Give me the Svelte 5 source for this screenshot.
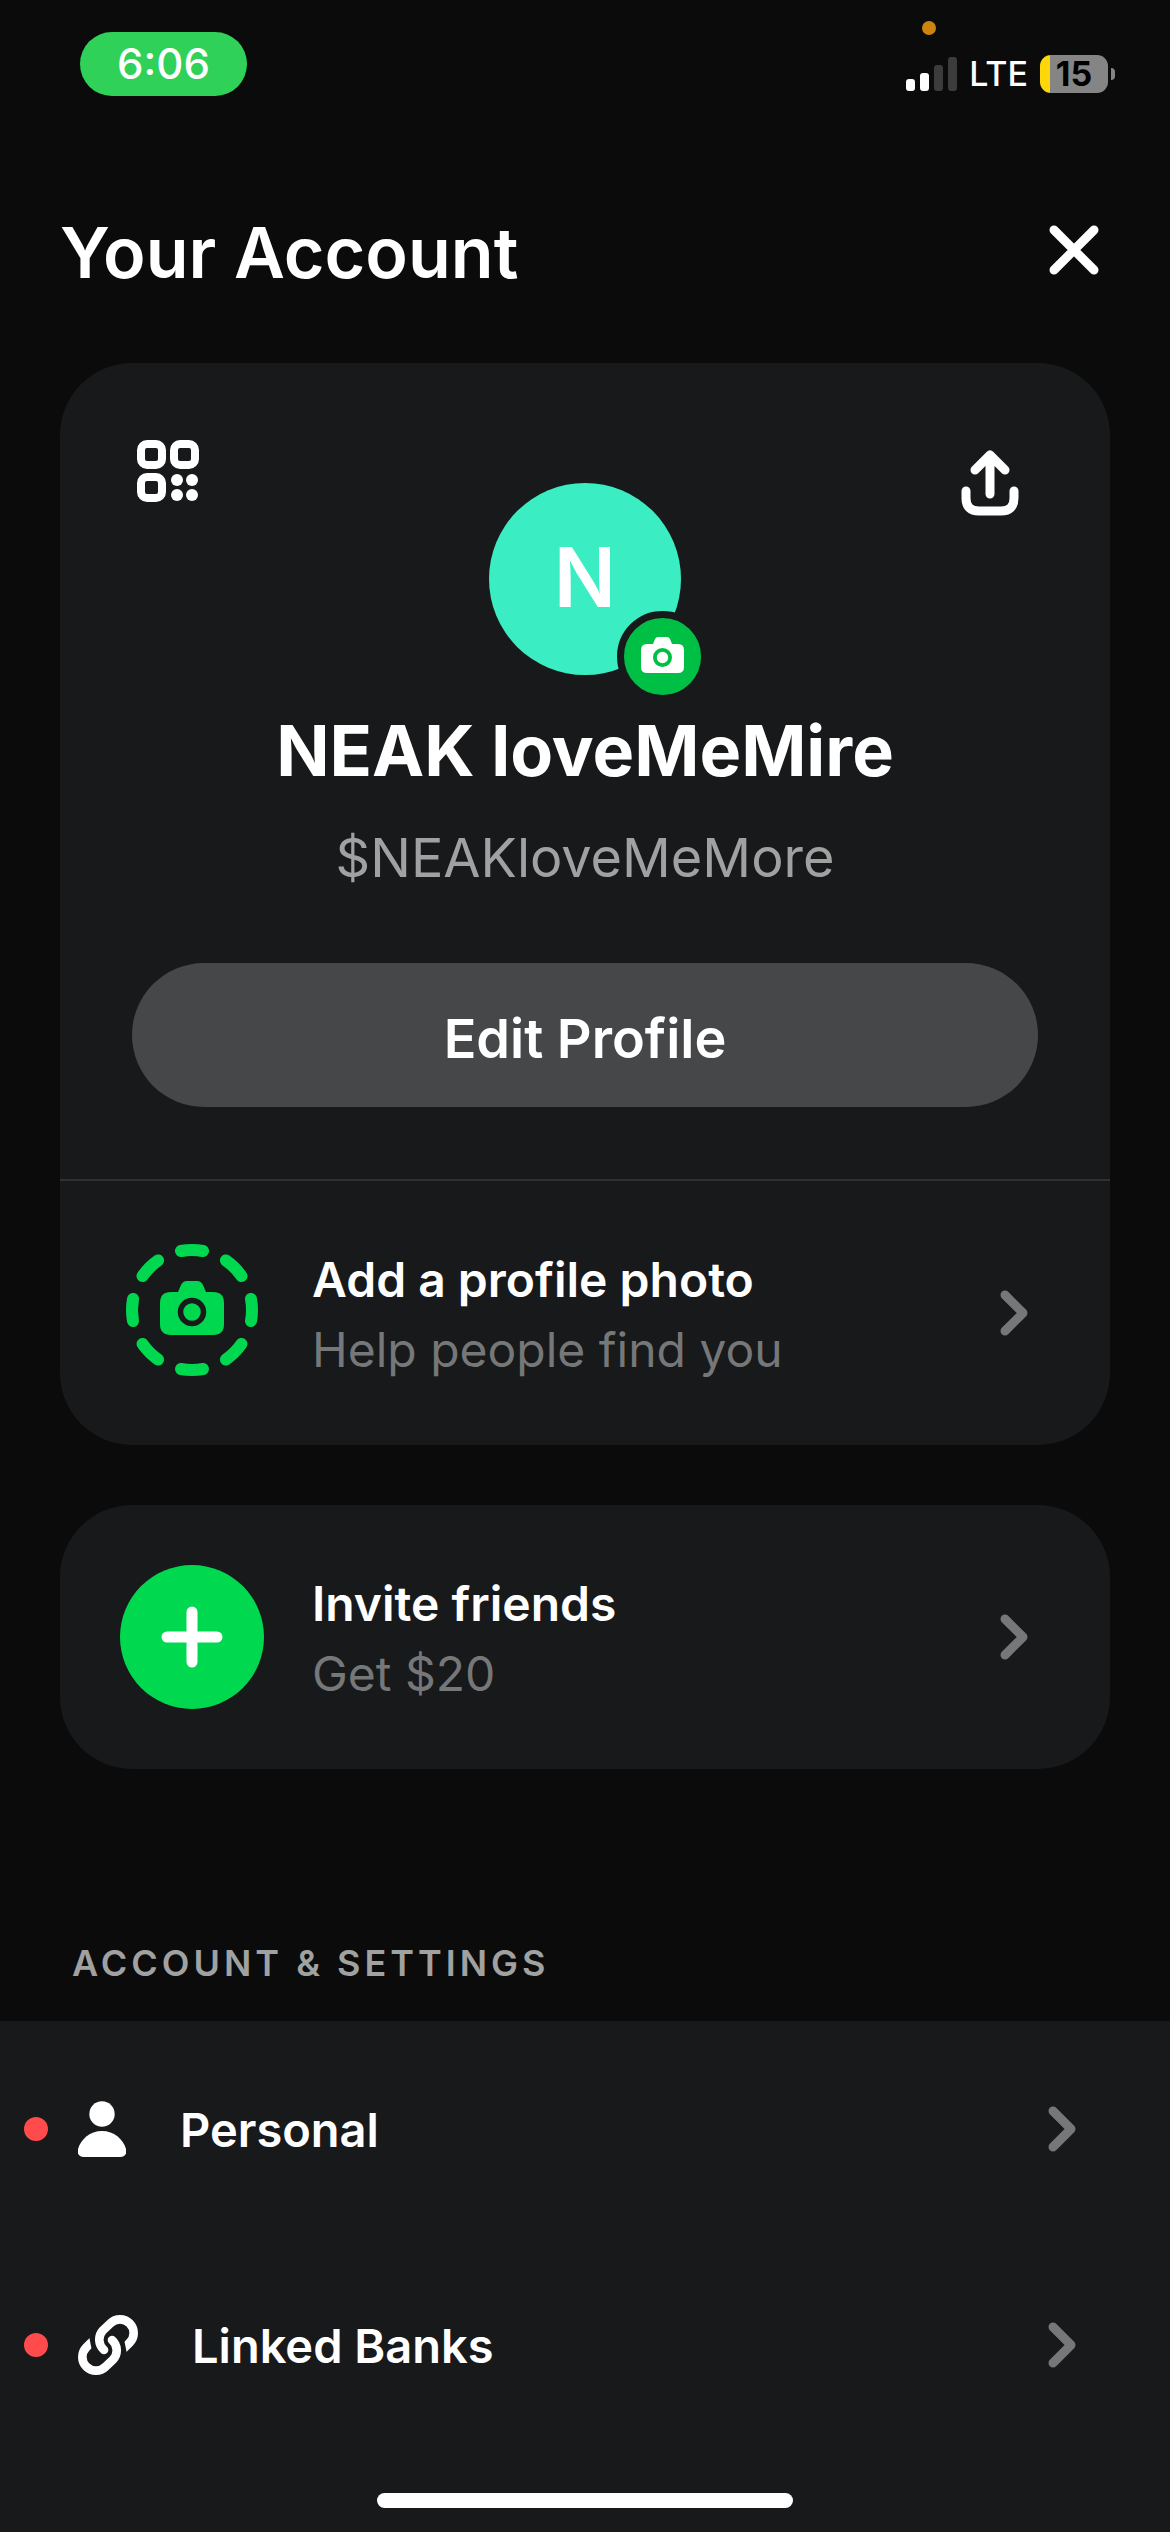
<script>
  const bars = [12, 18, 26, 34];

  const settings = [
    { label: 'Personal', icon: 'person', alert: true },
    { label: 'Linked Banks', icon: 'link', alert: true }
  ];

  // dashes around the camera, one every 45 degrees
  const dashes = [0, 45, 90, 135, 180, 225, 270, 315];
</script>

{#snippet chevron()}
  <svg class="chevron" viewBox="0 0 28 46" aria-hidden="true">
    <path d="M5 5L23 23L5 41" />
  </svg>
{/snippet}

<div class="page">
  <div class="status">
    <span class="time">6:06</span>
    <div class="indicators">
      <span class="mic"></span>
      <div class="signal">
        {#each bars as height, i}
          <span class="bar" class:off={i > 1} style="height: {height}px"></span>
        {/each}
      </div>
      <span class="network">LTE</span>
      <div class="battery"><span class="level">15</span></div>
    </div>
  </div>

  <header>
    <h1>Your Account</h1>
    <button class="close" aria-label="Close">
      <svg viewBox="0 0 50 50"><path d="M5 5L45 45M45 5L5 45" /></svg>
    </button>
  </header>

  <main>
    <section class="card">
      <div class="profile">
        <div class="top">
          <button class="qr" aria-label="QR code">
            <svg viewBox="0 0 62 62">
              <g fill="none" stroke="#fff" stroke-width="8">
                <rect x="4" y="4" width="21" height="21" rx="6" />
                <rect x="37" y="4" width="21" height="21" rx="6" />
                <rect x="4" y="37" width="21" height="21" rx="6" />
              </g>
              <g fill="#fff">
                <circle cx="40" cy="40" r="6" />
                <circle cx="55" cy="40" r="6" />
                <circle cx="40" cy="55" r="6" />
                <circle cx="55" cy="55" r="6" />
              </g>
            </svg>
          </button>
          <div class="avatar">
            N
            <button class="badge" aria-label="Change photo">
              <svg viewBox="0 0 43 36">
                <path fill="#fff" d="M6 7H12L14 2Q15 0 17 0H26Q28 0 29 2L31 7H37Q43 7 43 13V30Q43 36 37 36H6Q0 36 0 30V13Q0 7 6 7Z" />
                <circle cx="21.500" cy="20.500" r="7.600" fill="#fff" stroke="#00bf45" stroke-width="3.800" />
              </svg>
            </button>
          </div>
          <button class="share" aria-label="Share">
            <svg viewBox="0 0 58 66">
              <path d="M29 44V5M14 20L29 5L44 20M5 41V48Q5 61 18 61H40Q53 61 53 48V41" />
            </svg>
          </button>
        </div>
        <h2>NEAK loveMeMire</h2>
        <p class="handle">$NEAKloveMeMore</p>
        <button class="edit">Edit Profile</button>
      </div>

      <a class="row" href="#photo">
        <svg class="round" viewBox="0 0 144 144" aria-hidden="true">
          <g fill="none" stroke="#00d94f" stroke-width="12" stroke-linecap="round">
            {#each dashes as angle}
              <path d="M61 10Q72 8 83 10" transform="rotate({angle} 72 69)" />
            {/each}
          </g>
          <path fill="#00d94f" d="M51 51H58L61 44Q63 40 67 40H77Q81 40 83 44L86 51H93Q104 51 104 62V83Q104 94 93 94H51Q40 94 40 83V62Q40 51 51 51Z" />
          <circle cx="72" cy="71" r="11.500" fill="#00d94f" stroke="#18191a" stroke-width="5.500" />
        </svg>
        <span class="text">
          <strong>Add a profile photo</strong>
          <span>Help people find you</span>
        </span>
        {@render chevron()}
      </a>
    </section>

    <section class="card">
      <a class="row" href="#invite">
        <svg class="round" viewBox="0 0 144 144" aria-hidden="true">
          <circle cx="72" cy="72" r="72" fill="#00d94f" />
          <path d="M72 47V97M47 72H97" stroke="#fff" stroke-width="11" stroke-linecap="round" />
        </svg>
        <span class="text">
          <strong>Invite friends</strong>
          <span>Get $20</span>
        </span>
        {@render chevron()}
      </a>
    </section>
  </main>

  <h3>ACCOUNT &amp; SETTINGS</h3>
  <nav>
    {#each settings as item}
      <a class="setting" href="#{item.icon}">
        <span class="dot" class:alert={item.alert}></span>
        {#if item.icon === 'person'}
          <svg class="person" viewBox="0 0 48 56" aria-hidden="true">
            <circle cx="24" cy="13" r="12.700" />
            <path d="M24 30C36 30 45 38 48 48C49 53 47 56 42 56H6C1 56 -1 53 0 48C3 38 12 30 24 30Z" />
          </svg>
        {:else}
          <svg class="link" viewBox="0 0 180 180" aria-hidden="true">
            <clipPath id="cut"><path d="M0 0H180V180H150L146 112L139 77H115V180H0Z" /></clipPath>
            <path clip-path="url(#cut)" d="M78 105A41 41 0 0 1 75 46L97 25A41 41 0 0 1 155 83L130 108" />
            <g transform="rotate(180 90 90)">
              <path clip-path="url(#cut)" d="M78 105A41 41 0 0 1 75 46L97 25A41 41 0 0 1 155 83L130 108" />
            </g>
          </svg>
        {/if}
        <strong>{item.label}</strong>
        {@render chevron()}
      </a>
    {/each}
  </nav>
  <div class="home"></div>
</div>

<style>
  :global(body) {
    background: #0b0b0b;
  }

  .page {
    min-height: 100vh;
    display: flex;
    flex-direction: column;
    background: #0b0b0b;
    color: #fff;
    font-family: Inter, 'Noto Sans', sans-serif;
  }

  button {
    display: flex;
    align-items: center;
    justify-content: center;
    padding: 0;
    border: none;
    background: none;
    color: inherit;
    font: inherit;
    cursor: pointer;
  }

  a {
    color: inherit;
    text-decoration: none;
  }

  h1, h2, h3, p {
    margin: 0;
  }

  strong {
    font-weight: 600;
  }

  .status {
    display: flex;
    justify-content: space-between;
    align-items: flex-start;
    padding: 32px 55px 0 80px;
  }

  .time {
    width: 167px;
    border-radius: 32px;
    background: #30d158;
    font-size: 42px;
    font-weight: 500;
    line-height: 64px;
    text-align: center;
  }

  .indicators {
    position: relative;
    display: flex;
    align-items: center;
    padding-top: 23px;
  }

  .mic {
    position: absolute;
    top: -11px;
    right: 179px;
    width: 14px;
    height: 14px;
    border-radius: 50%;
    background: #cd840d;
  }

  .signal {
    display: flex;
    align-items: flex-end;
    gap: 5px;
    height: 34px;
  }

  .bar {
    width: 9px;
    border-radius: 3px;
    background: #fff;
  }

  .bar.off {
    background: #3c3c3c;
  }

  .network {
    margin: 0 12px;
    font-size: 34px;
    font-weight: 500;
    line-height: 38px;
  }

  .battery {
    display: flex;
    align-items: center;
    gap: 3px;
  }

  .battery::after {
    content: '';
    width: 4px;
    height: 12px;
    border-radius: 0 6px 6px 0;
    background: #858585;
  }

  .level {
    width: 68px;
    border-radius: 11px;
    background: linear-gradient(90deg, #ffd60a 10px, #858585 10px);
    color: #000;
    font-size: 34px;
    font-weight: 700;
    line-height: 38px;
    text-align: center;
  }

  header {
    display: flex;
    justify-content: space-between;
    align-items: flex-start;
    padding: 117px 59px 70px 60px;
  }

  h1 {
    font-size: 70px;
    font-weight: 600;
    line-height: 80px;
  }

  .close {
    width: 74px;
    height: 74px;
  }

  .close svg {
    width: 50px;
    height: 50px;
  }

  .close path, .share path {
    fill: none;
    stroke: #fff;
    stroke-width: 9;
    stroke-linecap: round;
    stroke-linejoin: round;
  }

  main {
    display: flex;
    flex-direction: column;
    gap: 60px;
    padding: 0 60px;
  }

  .card {
    border-radius: 72px;
    background: #18191a;
  }

  .profile {
    padding: 72px;
    border-bottom: 2px solid #303132;
    text-align: center;
  }

  .top {
    display: grid;
    grid-template-columns: 1fr auto 1fr;
    align-items: start;
  }

  .qr {
    width: 72px;
    height: 72px;
  }

  .qr svg {
    width: 62px;
    height: 62px;
  }

  .share {
    justify-self: end;
    width: 96px;
    height: 96px;
  }

  .share svg {
    width: 58px;
    height: 66px;
  }

  .avatar {
    position: relative;
    width: 192px;
    height: 192px;
    margin-top: 48px;
    border-radius: 50%;
    background: #3bedc2;
    font-size: 82px;
    font-weight: 600;
    line-height: 190px;
  }

  .badge {
    position: absolute;
    right: -27px;
    bottom: -27px;
    width: 91px;
    height: 91px;
    padding-bottom: 3px;
    border: 7px solid #18191a;
    border-radius: 50%;
    background: #00bf45;
  }

  .badge svg {
    width: 43px;
    height: 36px;
  }

  h2 {
    margin-top: 34px;
    font-size: 70px;
    font-weight: 700;
    line-height: 84px;
  }

  .handle {
    margin-top: 33px;
    color: #a0a1a1;
    font-size: 54px;
    line-height: 64px;
  }

  .edit {
    width: 100%;
    height: 144px;
    margin-top: 73px;
    padding-top: 6px;
    border-radius: 72px;
    background: #464748;
    font-size: 54px;
    font-weight: 600;
  }

  .row {
    display: flex;
    align-items: center;
    padding: 60px 82px 60px 60px;
  }

  .round {
    flex: none;
    width: 144px;
    height: 144px;
  }

  .text {
    display: flex;
    flex: 1;
    flex-direction: column;
    margin-left: 48px;
    padding-top: 4px;
    color: #767778;
    font-size: 48px;
    line-height: 70px;
  }

  .text strong {
    color: #fff;
  }

  .chevron {
    flex: none;
    width: 28px;
    height: 46px;
    fill: none;
    stroke: #767778;
    stroke-width: 9;
    stroke-linecap: round;
    stroke-linejoin: round;
  }

  h3 {
    margin: 174px 72px 38px;
    color: #a0a1a1;
    font-size: 36px;
    font-weight: 600;
    letter-spacing: 4px;
    line-height: 40px;
  }

  nav {
    flex: 1;
    padding-bottom: 78px;
    background: #18191a;
  }

  .setting {
    display: flex;
    align-items: center;
    height: 216px;
    padding: 0 94px 0 24px;
    font-size: 47px;
  }

  .setting svg:not(.chevron) {
    flex: none;
    margin: 0 54px 0 30px;
  }

  .setting strong {
    flex: 1;
  }

  .dot {
    width: 24px;
    height: 24px;
    border-radius: 50%;
  }

  .dot.alert {
    background: #ff4b4b;
  }

  .person {
    width: 48px;
    height: 56px;
    fill: #fff;
  }

  .link {
    width: 60px;
    height: 60px;
    fill: none;
    stroke: #fff;
    stroke-width: 26;
    stroke-linecap: round;
  }

  .home {
    position: fixed;
    bottom: 24px;
    left: 50%;
    width: 416px;
    height: 15px;
    margin-left: -208px;
    border-radius: 8px;
    background: #fff;
  }
</style>
